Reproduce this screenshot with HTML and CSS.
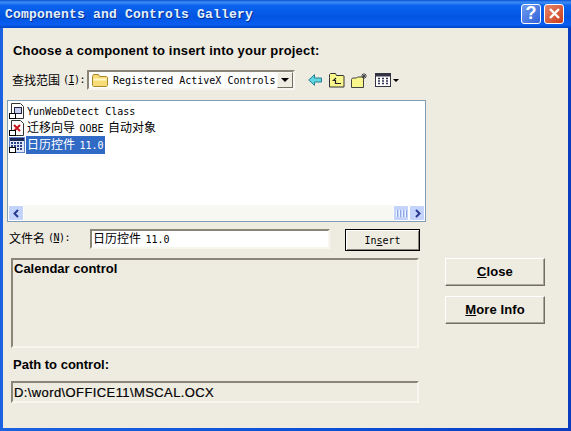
FILE: index.html
```html
<!DOCTYPE html>
<html lang="en">
<head>
    <meta charset="UTF-8">
    <meta name="viewport" content="width=device-width, initial-scale=1.0">
    <title>Components and Controls Gallery</title>
    <link rel="stylesheet" href="styles.css">
</head>
<body>
<div class="window">
    <!-- Title bar -->
    <div class="titlebar">
        <span class="title">Components and Controls Gallery</span>
        <div class="caption-btn help">?</div>
        <div class="caption-btn close">
            <svg width="13" height="13" viewBox="0 0 13 13"><path d="M2 2l9 9M11 2l-9 9" stroke="#fff" stroke-width="2.4" fill="none"/></svg>
        </div>
    </div>

    <div class="content">
        <p class="heading">Choose a component to insert into your project:</p>

        <!-- Look in row -->
        <div class="look-row">
            <span class="cjk-label"><span class="cjk">查找范围</span><span class="hotkey">(<u>I</u>):</span></span>
            <div class="combo">
                <svg class="folder" width="18" height="15" viewBox="0 0 18 15"><path d="M1.500 3.500l1-2h5l1 2h7l1 1v8l-1 1h-13l-1-1z" fill="#f8dc78" stroke="#a8872c"/><path d="M2.500 6.500h13" stroke="#fff6c4" stroke-width="2"/></svg>
                <span class="mono combo-text">Registered ActiveX Controls</span>
                <div class="combo-btn"><div class="combo-arrow"></div></div>
            </div>
            <div class="tools">
                <svg class="back" width="14" height="12" viewBox="0 0 14 12"><path d="M.700 6l5.800-5.300V4h7v4h-7v3.300z" fill="#5fd6e2" stroke="#27808c"/></svg>
                <svg class="up" width="16" height="15" viewBox="0 0 16 15"><path d="M.500 4.500v-3l1-1h5l1 2h7l.5.500v11H.500z" fill="#f9f78c" stroke="#333"/><path d="M7 5L4.500 7.500H6.500V10.500H12" fill="none" stroke="#222" stroke-width="1.200"/></svg>
                <svg class="new" width="17" height="15" viewBox="0 0 17 15"><path d="M.500 6.500l1-1.500h4l1-1h6v10.500H.500z" fill="#f9f78c" stroke="#444"/><path d="M13 0v6M10 3h6M11 1l4 4M15 1l-4 4" stroke="#444"/></svg>
                <div class="views">
                    <svg width="16" height="14" viewBox="0 0 16 14"><rect x=".500" y=".500" width="15" height="13" fill="#fff" stroke="#334"/><rect x="1" y="1" width="14" height="2.500" fill="#334"/><path d="M3 5.500h2M7 5.500h2M11 5.500h2M3 8h2M7 8h2M11 8h2M3 10.500h2M7 10.500h2M11 10.500h2" stroke="#335" stroke-width="1.400"/></svg>
                    <div class="views-arrow"></div>
                </div>
            </div>
        </div>

        <!-- File list -->
        <div class="list">
            <div class="items">
                <div class="item">
                    <svg width="16" height="16" viewBox="0 0 16 16"><path d="M2.500.500h9l3 3v12h-12z" fill="#fff" stroke="#333"/><rect x="5.500" y="4.500" width="7" height="6" fill="#c6cff0" stroke="#224"/><rect x=".5" y="10.500" width="6" height="5" fill="#fff" stroke="#000"/></svg>
                    <span class="item-text"><span class="mono">YunWebDetect Class</span></span>
                </div>
                <div class="item">
                    <svg width="16" height="16" viewBox="0 0 16 16"><path d="M2.500.500h9l3 3v12h-12z" fill="#fff" stroke="#333"/><path d="M5 5l6 6M11 5l-6 6" stroke="#c8141a" stroke-width="2"/><rect x=".5" y="10.500" width="6" height="5" fill="#fff" stroke="#000"/></svg>
                    <span class="item-text"><span class="cjk">迁移向导</span> <span class="mono">OOBE</span> <span class="cjk">自动对象</span></span>
                </div>
                <div class="item">
                    <svg width="16" height="16" viewBox="0 0 16 16"><rect width="16" height="16" fill="#5d80c6"/><rect x="1" y="1" width="14" height="14" fill="#dfe6f6"/><rect x="1" y="1" width="14" height="3" fill="#1d2a58"/><path d="M2 6h12M2 9h12M2 12h12" stroke="#2c4488" stroke-width="2" stroke-dasharray="2 1"/><rect x=".5" y="10.500" width="6" height="5" fill="#fff" stroke="#000"/></svg>
                    <span class="item-text selected"><span class="cjk">日历控件</span> <span class="mono">11.0</span></span>
                </div>
            </div>
            <div class="hscroll">
                <div class="scroll-btn">
                    <svg width="9" height="9" viewBox="0 0 9 9"><path d="M6 1L2.500 4.500 6 8" fill="none" stroke="#2a3a8c" stroke-width="2"/></svg>
                </div>
                <div class="scroll-track">
                    <div class="scroll-thumb"><i></i><i></i><i></i><i></i></div>
                </div>
                <div class="scroll-btn">
                    <svg width="9" height="9" viewBox="0 0 9 9"><path d="M3 1l3.500 3.500L3 8" fill="none" stroke="#2a3a8c" stroke-width="2"/></svg>
                </div>
            </div>
        </div>

        <!-- File name row -->
        <div class="name-row">
            <span class="cjk-label name-label"><span class="cjk">文件名</span><span class="hotkey">(<u>N</u>):</span></span>
            <div class="name-input"><span class="cjk">日历控件</span> <span class="mono">11.0</span></div>
            <button class="insert-btn mono">In<u>s</u>ert</button>
        </div>

        <!-- Details and side buttons -->
        <div class="bottom">
            <div class="details">
                <div class="sunken description">Calendar control</div>
                <div class="path-label">Path to control:</div>
                <div class="sunken path">D:\word\OFFICE11\MSCAL.OCX</div>
            </div>
            <div class="side">
                <button class="side-btn"><u>C</u>lose</button>
                <button class="side-btn"><u>M</u>ore Info</button>
            </div>
        </div>
    </div>
</div>
</body>
</html>
```

FILE: styles.css
```css
html, body {
    margin: 0;
    padding: 0;
}
body {
    width: 571px;
    height: 431px;
    overflow: hidden;
    font-family: "Liberation Sans", Arial, sans-serif;
    color: #000;
}
svg {
    flex-shrink: 0;
    display: block;
}
.mono {
    font-family: "DejaVu Sans Mono", monospace;
    font-size: 10px;
}
.cjk {
    font-family: "Noto Sans CJK SC", sans-serif;
    font-size: 12px;
}
.window {
    display: flex;
    flex-direction: column;
    height: 431px;
    background: linear-gradient(to right, #1a62e0 0%, #0a4fd8 60%, #0a3cc0 100%);
}
/* Title bar */
.titlebar {
    display: flex;
    align-items: center;
    height: 28px;
    padding: 0 7px 0 5px;
    box-sizing: border-box;
    background: linear-gradient(to bottom, #0a52d6 0%, #3f8cf3 8%, #0a63ee 20%, #0255e2 60%, #0a5ef0 88%, #0044c8 100%);
}
.title {
    flex: 1;
    margin-top: 1px;
    font-family: "Liberation Mono", monospace;
    font-size: 13px;
    font-weight: bold;
    letter-spacing: 0.2px;
    color: #e4f2ff;
    text-shadow: 1px 1px #0a2f90;
}
.caption-btn {
    display: flex;
    align-items: center;
    justify-content: center;
    width: 20px;
    height: 20px;
    margin: 0 0 1px 3px;
    box-sizing: border-box;
    border: 1px solid #fff;
    border-radius: 3px;
    color: #fff;
    font-size: 18px;
    font-weight: bold;
}
.help {
    background: linear-gradient(135deg, #6f9cf0, #2f62d8);
}
.close {
    background: linear-gradient(135deg, #e8856a, #c83c18);
}
/* Main panel */
.content {
    flex: 1;
    margin: 0 3px 3px 3px;
    padding: 0 4px;
    background-color: #eeebe0;
    min-height: 0;
}
.heading {
    margin: 15px 0 0 6px;
    font-size: 13px;
    font-weight: bold;
    line-height: 15px;
    letter-spacing: 0.19px;
}
.cjk-label {
    display: flex;
    align-items: center;
    line-height: 16px;
}
.hotkey {
    margin-left: 3px;
    font-family: "DejaVu Sans Mono", monospace;
    font-size: 10px;
    letter-spacing: -0.5px;
}
.look-row {
    display: flex;
    align-items: center;
    height: 22px;
    margin-top: 11px;
    padding-left: 5px;
}
.look-row .cjk-label {
    width: 75px;
}
.combo {
    display: flex;
    align-items: center;
    width: 208px;
    height: 20px;
    box-sizing: border-box;
    border: 2px solid;
    border-color: #8a8778 #f7f6ef #f7f6ef #8a8778;
    background-color: #fff;
}
.folder {
    margin-left: 2px;
}
.combo-text {
    flex: 1;
    margin-left: 4px;
    white-space: nowrap;
}
.combo-btn {
    display: flex;
    align-items: center;
    justify-content: center;
    width: 16px;
    height: 16px;
    box-sizing: border-box;
    border: 1px solid;
    border-color: #f8f7f0 #716f64 #716f64 #f8f7f0;
    background-color: #eeebe0;
}
.combo-arrow, .views-arrow {
    width: 0;
    height: 0;
    border-left: 4px solid transparent;
    border-right: 4px solid transparent;
    border-top: 4px solid #000;
}
.tools {
    display: flex;
    align-items: center;
    margin-left: 13px;
}
.up {
    margin-left: 7px;
}
.new {
    margin-left: 6px;
}
.views {
    display: flex;
    align-items: center;
    gap: 2px;
    margin-left: 7px;
}
.views-arrow {
    border-left-width: 3px;
    border-right-width: 3px;
    border-top-width: 3px;
}
/* List */
.list {
    display: flex;
    flex-direction: column;
    width: 419px;
    height: 122px;
    margin-top: 9px;
    box-sizing: border-box;
    border: 1px solid #7f9db9;
    background-color: #fff;
}
.items {
    flex: 1;
    padding: 1px 0 0 1px;
}
.item {
    display: flex;
    align-items: center;
    gap: 1px;
    height: 17px;
}
.item-text {
    padding: 0 1px;
    line-height: 16px;
    white-space: pre;
}
.selected {
    background-color: #316ac5;
    color: #fff;
}
.hscroll {
    display: flex;
    height: 16px;
    background-color: #f8f8f2;
}
.scroll-btn {
    display: flex;
    align-items: center;
    justify-content: center;
    width: 16px;
    box-sizing: border-box;
    border: 1px solid #fff;
    border-radius: 2px;
    background-color: #c3d3fb;
}
.scroll-track {
    flex: 1;
    display: flex;
    justify-content: flex-end;
}
.scroll-thumb {
    display: flex;
    align-items: center;
    justify-content: center;
    gap: 1px;
    width: 16px;
    box-sizing: border-box;
    border: 1px solid #fff;
    border-radius: 2px;
    background-color: #c3d3fb;
}
.scroll-thumb i {
    width: 1px;
    height: 7px;
    background-color: #eef4fe;
    border-right: 1px solid #8ca6e4;
}
/* File name row */
.name-row {
    display: flex;
    align-items: flex-start;
    margin-top: 7px;
    padding-left: 2px;
}
.name-label {
    width: 81px;
    margin-top: 1px;
}
.name-input {
    width: 240px;
    height: 20px;
    box-sizing: border-box;
    border: 2px solid;
    border-color: #8a8778 #f7f6ef #f7f6ef #8a8778;
    background-color: #fff;
    padding-left: 1px;
    line-height: 14px;
    white-space: pre;
}
.insert-btn {
    width: 75px;
    height: 22px;
    margin-left: 15px;
    box-sizing: border-box;
    border: 1px solid #000;
    box-shadow: inset 1px 1px #fff, inset -1px -1px #8a8778;
    background-color: #eeebe0;
    color: #000;
    padding: 0;
}
/* Bottom area */
.bottom {
    display: flex;
    margin-top: 7px;
}
.details {
    width: 408px;
    margin-left: 4px;
}
.sunken {
    box-sizing: border-box;
    border: 2px solid;
    border-color: #8a8778 #f7f6ef #f7f6ef #8a8778;
    font-size: 13px;
    font-weight: bold;
    line-height: 15px;
    padding: 1px 1px 0;
}
.description {
    height: 90px;
}
.path-label {
    margin: 9px 0 0 2px;
    font-size: 13px;
    font-weight: bold;
    line-height: 15px;
}
.path {
    height: 22px;
    margin-top: 9px;
    font-weight: normal;
    letter-spacing: 0.4px;
    -webkit-text-stroke: 0.2px #000;
    padding-top: 2px;
}
.side {
    display: flex;
    flex-direction: column;
    gap: 10px;
    margin-left: 26px;
}
.side-btn {
    width: 100px;
    height: 28px;
    box-sizing: border-box;
    border: 1px solid;
    border-color: #fff #716f64 #716f64 #fff;
    box-shadow: inset -1px -1px #aca899;
    background-color: #eeebe0;
    color: #000;
    font-family: "Liberation Sans", Arial, sans-serif;
    font-size: 13px;
    font-weight: bold;
    letter-spacing: 0.1px;
    padding: 0 0 2px;
}
```
